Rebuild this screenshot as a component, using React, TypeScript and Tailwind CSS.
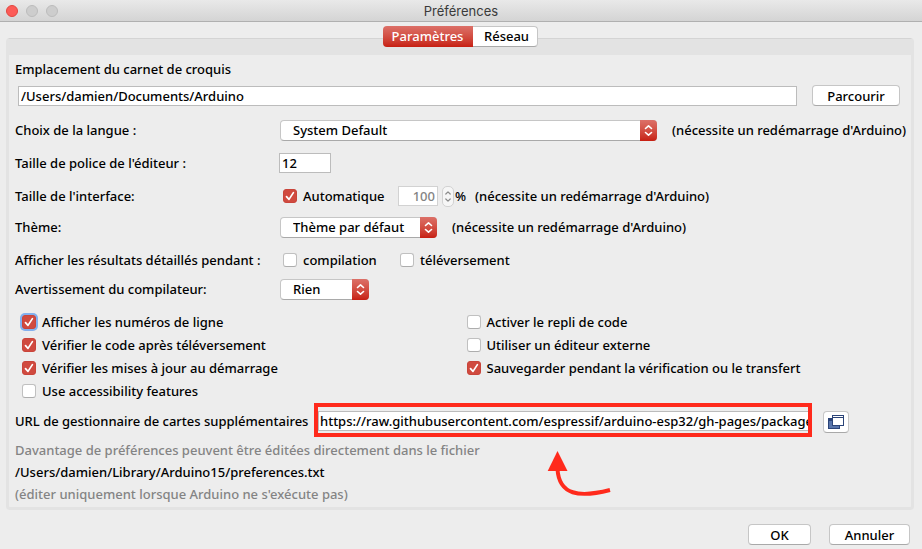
import React from "react";

const raised =
  "rounded border border-[#c6c6c6] border-b-[#a9a9a9] bg-white text-center";

function Push({ children, className }: { children: React.ReactNode; className: string }) {
  return (
    <button type="button" className={`${raised} flex h-[21px] items-center justify-center ${className}`}>
      {children}
    </button>
  );
}

function Choice({ id, value, className }: { id: string; value: string; className: string }) {
  return (
    <div className={`relative h-[21px] shrink-0 ${className}`}>
      <select id={id} defaultValue={value} className={`${raised} block h-full w-full appearance-none pl-3 pr-5 text-left`}>
        <option>{value}</option>
      </select>
      <span className="pointer-events-none absolute inset-y-0 right-0 flex w-[17px] items-center justify-center rounded-r bg-gradient-to-b from-[#dc7068] to-[#c71d10]">
        <svg width="9" height="13" viewBox="0 0 9 13" fill="none" stroke="white" strokeWidth="1.6" strokeLinecap="round" strokeLinejoin="round">
          <path d="M1.5 4.5 4.5 1.8 7.5 4.5M1.5 8.5 4.5 11.2 7.5 8.5" />
        </svg>
      </span>
    </div>
  );
}

function Check({ label, checked = false, focused = false }: { label: string; checked?: boolean; focused?: boolean }) {
  return (
    <label className="flex h-[23px] items-center gap-[6px] whitespace-nowrap">
      <span className="relative flex h-[14px] w-[14px]">
        <input
          type="checkbox"
          defaultChecked={checked}
          className={`peer h-[14px] w-[14px] appearance-none rounded-[3px] border border-[#c0c0c0] border-b-[#adadad] bg-white checked:border-[#c9443a] checked:bg-[#d04a3f] ${focused ? "ring-2 ring-[#83b0ee]" : ""}`}
        />
        <svg className="pointer-events-none absolute inset-0 hidden peer-checked:block" width="14" height="14" viewBox="0 0 14 14" fill="none" stroke="white" strokeWidth="1.7" strokeLinecap="round" strokeLinejoin="round">
          <path d="M3.5 7.6 6 10.4 10.4 3.6" />
        </svg>
      </span>
      {label}
    </label>
  );
}

function Row({ label, htmlFor, className, children }: { label: string; htmlFor?: string; className: string; children: React.ReactNode }) {
  return (
    <div className={`flex h-6 items-center whitespace-nowrap ${className}`}>
      {htmlFor ? (
        <label htmlFor={htmlFor} className="w-[265px] shrink-0">{label}</label>
      ) : (
        <span className="w-[265px] shrink-0">{label}</span>
      )}
      {children}
    </div>
  );
}

const restart = "(nécessite un redémarrage d'Arduino)";

export default function App() {
  return (
    <div className="flex min-h-screen flex-col bg-[#ededed] font-['Noto_Sans',sans-serif] text-[13px] font-medium leading-[18px] text-black">
      <header className="relative flex h-[22px] items-center justify-center border-b border-[#b0b0b0] bg-gradient-to-b from-[#e9e9e9] to-[#d4d4d4]">
        <div className="absolute inset-y-0 left-[6px] flex items-center gap-2">
          <button type="button" aria-label="Fermer" className="h-3 w-3 rounded-full border border-[#e2463f] bg-[#fc5b57]" />
          <button type="button" aria-label="Réduire" className="h-3 w-3 rounded-full border border-[#bcbcbc] bg-[#cdcdcd]" />
          <button type="button" aria-label="Agrandir" className="h-3 w-3 rounded-full border border-[#bcbcbc] bg-[#cdcdcd]" />
        </div>
        <h1 className="font-[Inter,sans-serif] text-[13px] font-normal text-[#3a3a3a]">Préférences</h1>
      </header>

      <nav className="relative z-10 flex justify-center pr-[2px] pt-1">
        <button type="button" className="h-[21px] w-[90px] rounded-l bg-gradient-to-b from-[#dc7068] to-[#c71d10] pb-px text-white">
          Paramètres
        </button>
        <button type="button" className="h-[21px] w-[65px] rounded-r border border-l-0 border-[#c6c6c6] border-b-[#a9a9a9] bg-white pb-px pl-1">
          Réseau
        </button>
      </nav>

      <main className="-mt-[9px] ml-[6px] mr-2 rounded border-[3px] border-t border-[#e3e3e3] border-t-[#d4d4d4]">
        <div className="h-4 bg-[#e3e3e3]" />
        <div className="px-[6px] pb-[2px] pt-[5px]">
          <label htmlFor="sketchbook" className="block">Emplacement du carnet de croquis</label>
          <div className="mt-[7px] flex items-center gap-[15px] pl-[3px] pr-[5px]">
            <input id="sketchbook" defaultValue="/Users/damien/Documents/Arduino" className="h-5 min-w-0 flex-1 border border-[#bcbcbc] bg-white px-[2px]" />
            <Push className="w-[88px]">Parcourir</Push>
          </div>

          <Row label="Choix de la langue :" htmlFor="lang" className="mt-3">
            <Choice id="lang" value="System Default" className="w-[377px]" />
            <span className="ml-[15px]">{restart}</span>
          </Row>
          <Row label="Taille de police de l'éditeur :" htmlFor="size" className="mt-[9px]">
            <input id="size" defaultValue="12" className="-ml-px h-5 w-[52px] border border-[#bcbcbc] bg-white px-[2px]" />
          </Row>
          <Row label="Taille de l'interface:" className="mt-[9px]">
            <div className="ml-[3px] w-[115px]"><Check label="Automatique" checked /></div>
            <input aria-label="Échelle" disabled defaultValue="100" className="h-5 w-10 border border-[#d2d2d2] bg-white px-[2px] text-right text-[#848484]" />
            <button type="button" disabled aria-label="Ajuster" className="ml-1 flex h-[21px] w-3 items-center justify-center rounded-[5px] border border-[#d2d2d2] bg-[#f6f6f6]">
              <svg width="8" height="13" viewBox="0 0 8 13" fill="none" stroke="#8a8a8a" strokeWidth="1.2" strokeLinecap="round" strokeLinejoin="round">
                <path d="M1.8 4 4 1.8 6.2 4M1.8 9 4 11.2 6.2 9" />
              </svg>
            </button>
            <span className="ml-px w-5">%</span>
            <span>{restart}</span>
          </Row>
          <Row label="Thème:" htmlFor="theme" className="mt-[7px]">
            <Choice id="theme" value="Thème par défaut" className="w-[157px]" />
            <span className="ml-[15px]">{restart}</span>
          </Row>
          <Row label="Afficher les résultats détaillés pendant :" className="mt-[9px]">
            <div className="ml-[3px] w-[117px]"><Check label="compilation" /></div>
            <Check label="téléversement" />
          </Row>
          <Row label="Avertissement du compilateur:" htmlFor="warn" className="mt-[5px]">
            <Choice id="warn" value="Rien" className="w-[89px]" />
          </Row>

          <div className="mt-[9px] grid grid-cols-2 pl-[7px]">
            <div>
              <Check label="Afficher les numéros de ligne" checked focused />
              <Check label="Vérifier le code après téléversement" checked />
              <Check label="Vérifier les mises à jour au démarrage" checked />
              <Check label="Use accessibility features" />
            </div>
            <div className="pl-[3px]">
              <Check label="Activer le repli de code" />
              <Check label="Utiliser un éditeur externe" />
              <Check label="Sauvegarder pendant la vérification ou le transfert" checked />
            </div>
          </div>

          <div className="mt-px flex items-center whitespace-nowrap">
            <label htmlFor="urls" className="w-[299px] shrink-0 pt-[2px]">URL de gestionnaire de cartes supplémentaires</label>
            <div className="min-w-0 flex-1 border-4 border-[#ff2a1c] pb-[2px] pt-1">
              <input
                id="urls"
                defaultValue="https://raw.githubusercontent.com/espressif/arduino-esp32/gh-pages/package_esp32_index.json"
                className="block h-5 w-full border border-r-0 border-[#bcbcbc] bg-white pl-px"
              />
            </div>
            <button type="button" aria-label="Modifier les URL" className={`${raised} ml-[11px] mr-14 mt-1 flex h-[22px] w-[26px] items-center justify-center`}>
              <svg width="16" height="14" viewBox="0 0 16 14" shapeRendering="crispEdges">
                <path fill="#2b4478" d="M0 3h12v11H0z" />
                <path fill="#5874aa" d="M1 6h10v7H1z" />
                <path fill="#2b4478" d="M4 0h12v11H4z" />
                <path fill="#fff" d="M5 1h10v1H5zM5 3h10v7H5z" />
              </svg>
            </button>
          </div>

          <div className="relative mt-[2px] leading-[22px]">
            <p className="text-[#848484]">Davantage de préférences peuvent être éditées directement dans le fichier</p>
            <p>/Users/damien/Library/Arduino15/preferences.txt</p>
            <p className="text-[#848484]">(éditer uniquement lorsque Arduino ne s'exécute pas)</p>
            <svg className="absolute left-[532px] top-3" width="66" height="48" viewBox="0 0 66 48">
              <path d="M10.5 18C12 44 32 47 63 39" fill="none" stroke="#ff2a1c" strokeWidth="4" />
              <path d="M10.5 0 0.7 20H20.5Z" fill="#ff2a1c" />
            </svg>
          </div>
        </div>
      </main>

      <footer className="mt-[14px] flex justify-end gap-[18px] pb-1 pr-3">
        <Push className="w-[63px]">OK</Push>
        <Push className="w-[81px]">Annuler</Push>
      </footer>
    </div>
  );
}
